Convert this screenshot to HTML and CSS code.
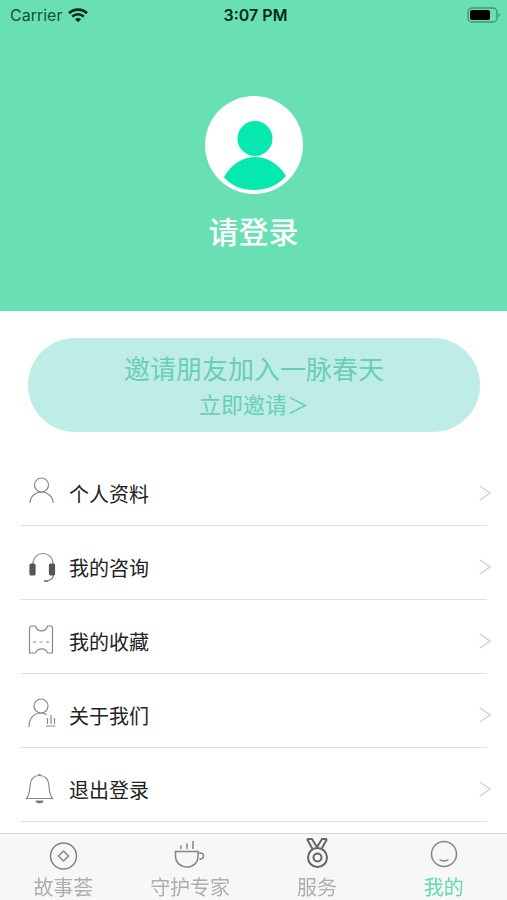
FILE: index.html
```html
<!DOCTYPE html>
<html lang="zh-CN">
<head>
    <meta charset="UTF-8">
    <meta name="viewport" content="width=device-width, initial-scale=1.0">
    <title>我的</title>
    <link rel="stylesheet" href="styles.css">
</head>
<body>
    <header class="hero">
        <div class="status-bar">
            <div class="carrier">
                <span>Carrier</span>
                <svg width="20" height="15" viewBox="0 0 20 15" fill="none" stroke="#052a1c" stroke-width="2.6">
                    <path d="M1 5.2C6 .4 14 .4 19 5.2"/>
                    <path d="M4.2 8.6C7.6 5.4 12.4 5.4 15.8 8.6"/>
                    <path d="M7 11.2C8.8 9.6 11.2 9.6 13 11.2L10 14.2Z" fill="#052a1c" stroke="none"/>
                </svg>
            </div>
            <div class="time">3:07 PM</div>
            <div class="battery">
                <svg width="34" height="16" viewBox="0 0 34 16">
                    <rect x="1" y="1" width="29" height="14" rx="4" fill="none" stroke="#42967a" stroke-width="1.4"/>
                    <rect x="3" y="3" width="20" height="10" rx="2" fill="#000"/>
                    <path d="M31.5 5.8C33.5 6.6 33.5 9.4 31.5 10.2Z" fill="#42967a"/>
                </svg>
            </div>
        </div>
        <a class="profile" href="#login">
            <svg class="avatar" viewBox="0 0 98 98">
                <circle cx="49" cy="49" r="49" fill="#fff"/>
                <circle cx="50" cy="42.500" r="17.500" fill="#05e8ae"/>
                <path d="M19 81C26 68 38 61 50 61C62 61 74 68 81 80C73 89 62 94 49 94C37 94 26 90 19 81Z" fill="#05e8ae"/>
            </svg>
            <span>请登录</span>
        </a>
    </header>

    <main>
        <button class="invite" type="button">
            <span class="invite-title">邀请朋友加入一脉春天</span>
            <span class="invite-action">立即邀请＞</span>
        </button>

        <nav class="menu">
            <a class="menu-item" href="#profile">
                <svg class="menu-icon" viewBox="0 0 30 32">
                    <circle cx="12.500" cy="8" r="7"/>
                    <path d="M1 26A11.500 11 0 0 1 24 26"/>
                </svg>
                <span>个人资料</span>
                <svg class="arrow" viewBox="0 0 12 18"><path d="M1 2L11 9L1 16"/></svg>
            </a>
            <a class="menu-item" href="#consult">
                <svg class="menu-icon" viewBox="0 0 30 32">
                    <path d="M4 13C4 6 9 2.500 14 2.500S24 6 24 13"/>
                    <path d="M24.500 23C25 27 22 29.500 17 30"/>
                    <path d="M15 30H19" stroke-width="2"/>
                    <rect x="1" y="13" width="5" height="11" rx="1" fill="#555" stroke="#555"/>
                    <rect x="20.500" y="13" width="5" height="11" rx="1" fill="#555" stroke="#555"/>
                </svg>
                <span>我的咨询</span>
                <svg class="arrow" viewBox="0 0 12 18"><path d="M1 2L11 9L1 16"/></svg>
            </a>
            <a class="menu-item" href="#favorites">
                <svg class="menu-icon" viewBox="0 0 30 32">
                    <path d="M2 1H6.500C8.500 7.500 16.500 7.500 18.500 1H22.500L23.500 2.500V28H18.500C16.500 22.500 9 22.500 6.500 28H.5V2.500Z"/>
                    <path d="M4 17H20" stroke-dasharray="3 3.500"/>
                </svg>
                <span>我的收藏</span>
                <svg class="arrow" viewBox="0 0 12 18"><path d="M1 2L11 9L1 16"/></svg>
            </a>
            <a class="menu-item" href="#about">
                <svg class="menu-icon" viewBox="0 0 30 32">
                    <circle cx="12" cy="7" r="7"/>
                    <path d="M0 28C0 19 5 14 12 14C14.500 14 16.500 14.500 17.500 16"/>
                    <path d="M18.500 19V25M22 16V25M25.500 19V25M17 27H26.500"/>
                </svg>
                <span>关于我们</span>
                <svg class="arrow" viewBox="0 0 12 18"><path d="M1 2L11 9L1 16"/></svg>
            </a>
            <a class="menu-item" href="#logout">
                <svg class="menu-icon" viewBox="0 0 30 32">
                    <path d="M-2.500 25.500H23.500C20.500 22 20.500 19 20 13C19.500 6 16 2.500 10.500 2.500S1.500 6 1 13C.5 19 .5 22 -2.500 25.500Z"/>
                    <path d="M10.500 1V3" stroke-width="2.500"/>
                    <path d="M7 28H14C13.500 30.500 7.500 30.500 7 28Z" fill="#555"/>
                </svg>
                <span>退出登录</span>
                <svg class="arrow" viewBox="0 0 12 18"><path d="M1 2L11 9L1 16"/></svg>
            </a>
        </nav>
    </main>

    <nav class="tab-bar">
        <a class="tab" href="#stories">
            <svg viewBox="0 0 32 36">
                <circle cx="16.500" cy="17" r="13"/>
                <path d="M16.500 12L21.500 17L16.500 22L11.500 17Z"/>
            </svg>
            <span>故事荟</span>
        </a>
        <a class="tab" href="#experts">
            <svg viewBox="0 0 32 36">
                <path d="M1.500 12.500H24V17C24 24 19 28 13 28S1.500 24 1.500 17Z"/>
                <path d="M24.500 14C30.500 13 31.500 19 25.500 20.500"/>
                <path d="M7 6.500V10M13 4.500V10M19 2V10"/>
            </svg>
            <span>守护专家</span>
        </a>
        <a class="tab tab-bold" href="#services">
            <svg viewBox="0 0 32 36">
                <circle cx="16.500" cy="18.500" r="9.500"/>
                <circle cx="16.500" cy="18.500" r="4"/>
                <path d="M6 0H11L16.500 9M6 0L11.500 10M26 0H21L15.500 9M26 0L20.500 10"/>
            </svg>
            <span>服务</span>
        </a>
        <a class="tab active" href="#me">
            <svg viewBox="0 0 32 36">
                <circle cx="16" cy="15" r="12.500"/>
                <path d="M11.500 20.500C14 22.500 18 22.500 20.500 20.500"/>
            </svg>
            <span>我的</span>
        </a>
    </nav>
</body>
</html>
```

FILE: styles.css
```css
:root {
    --green: #68e0b3;
    --line: #dedede;
}

* {
    margin: 0;
    padding: 0;
    box-sizing: border-box;
}

body {
    display: flex;
    flex-direction: column;
    min-height: 100vh;
    background: #fff;
    color: #222;
    font-family: Inter, "Noto Sans CJK SC", sans-serif;
}

a {
    color: inherit;
    text-decoration: none;
}

svg {
    display: block;
    flex-shrink: 0;
    overflow: visible;
}

.hero {
    background: var(--green);
    padding-bottom: 58px;
}

.status-bar {
    display: grid;
    grid-template-columns: 1fr auto 1fr;
    align-items: center;
    height: 30px;
    padding: 0 6px 0 10px;
    font-size: 16px;
    color: #15513a;
}

.carrier {
    display: flex;
    align-items: center;
    gap: 6px;
}

.time {
    font-weight: 600;
    color: #06281b;
}

.battery {
    justify-self: end;
}

.profile {
    display: flex;
    flex-direction: column;
    align-items: center;
    gap: 17px;
    padding-top: 66px;
    font-size: 30px;
    line-height: 42px;
    font-weight: 500;
    color: #fff;
}

.avatar {
    width: 98px;
    height: 98px;
}

main {
    flex: 1;
    padding: 27px 20px 10px 21px;
}

.invite {
    display: flex;
    flex-direction: column;
    align-items: center;
    justify-content: center;
    width: calc(100% - 14px);
    height: 94px;
    margin: 0 auto 20px;
    padding-top: 4px;
    border: 0;
    border-radius: 47px;
    background: #bdede6;
    color: #6acdb9;
    font-family: inherit;
    cursor: pointer;
}

.invite-title {
    font-size: 26px;
    line-height: 36px;
}

.invite-action {
    font-size: 22px;
    line-height: 34px;
}

.menu-item {
    display: flex;
    align-items: center;
    height: 74px;
    padding: 9px 0 0 8px;
    border-bottom: 1px solid var(--line);
    font-size: 20px;
}

.menu-icon {
    width: 30px;
    height: 32px;
    margin-right: 10px;
    fill: none;
    stroke: #888;
    stroke-width: 1.2;
}

.arrow {
    width: 12px;
    height: 18px;
    margin-left: auto;
    margin-right: -4px;
    fill: none;
    stroke: #d2d2d2;
    stroke-width: 1.5;
}

.tab-bar {
    position: sticky;
    bottom: 0;
    display: grid;
    grid-template-columns: repeat(4, 1fr);
    height: 67px;
    border-top: 1px solid #d4d4d4;
    background: #f7f7f7;
}

.tab {
    display: flex;
    flex-direction: column;
    align-items: center;
    padding-top: 5px;
    font-size: 20px;
    line-height: 26px;
    color: #adadad;
}

.tab svg {
    width: 32px;
    height: 36px;
    fill: none;
    stroke: #858585;
    stroke-width: 1.5;
}

.tab-bold svg {
    stroke: #666;
    stroke-width: 2;
}

.tab.active {
    color: #5fdcae;
}
```
